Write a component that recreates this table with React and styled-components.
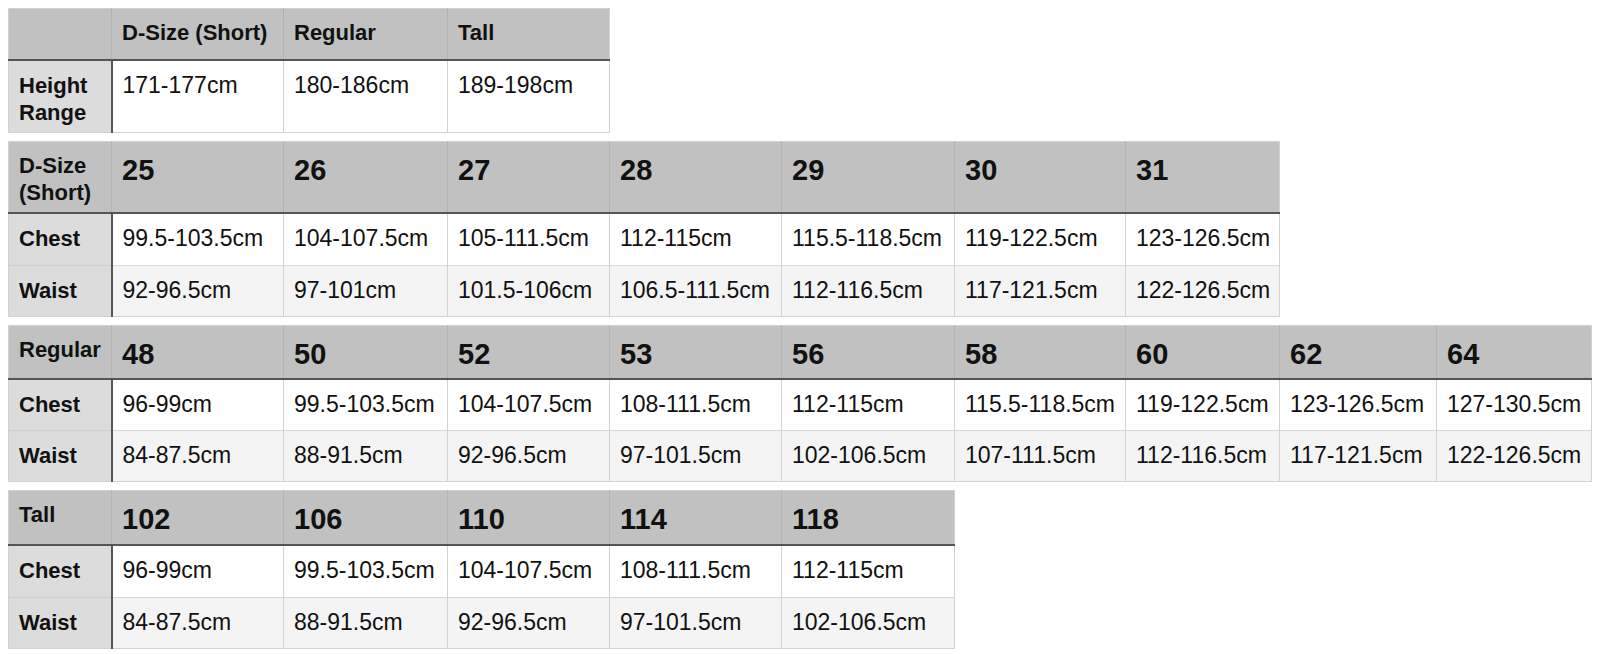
import React from "react";
import styled, { createGlobalStyle } from "styled-components";

const Global = createGlobalStyle`
  html, body { margin: 0; padding: 0; background: #ffffff; }
  body { font-family: "Liberation Sans", Arial, Helvetica, sans-serif; color: #111; }
`;

const COLS = [103, 172, 164, 162, 172, 173, 171, 154, 157, 155];

const Page = styled.div`
  display: flex;
  flex-direction: column;
  align-items: flex-start;
  gap: 8px;
  padding: 8px;
`;

const Table = styled.table`
  border-collapse: collapse;
  table-layout: fixed;
  border: 1px solid #d2d2d2;
`;

const HeadRow = styled.tr`
  height: ${(p) => p.$h}px;
  background: #c0c1c0;
  border-bottom: 2px solid #555555;
`;

const BodyRow = styled.tr`
  height: ${(p) => p.$h}px;
  background: ${(p) => (p.$alt ? "#f4f4f4" : "#ffffff")};
`;

const Corner = styled.th`
  vertical-align: top;
  text-align: left;
  padding: 10px 10px 6px;
  font-size: 22px;
  line-height: 27px;
  font-weight: 700;
  border-right: 1px solid #b3b3b3;
`;

const HeadCell = styled.th`
  vertical-align: top;
  text-align: left;
  padding: 10px 10px 6px;
  font-size: ${(p) => (p.$big ? 29 : 22)}px;
  line-height: ${(p) => (p.$big ? 36 : 27)}px;
  font-weight: 700;
  border-left: 1px solid #b3b3b3;
  white-space: nowrap;
`;

const RowLabel = styled.th`
  vertical-align: top;
  text-align: left;
  padding: 11px 10px 6px;
  font-size: 22px;
  line-height: 27px;
  font-weight: 700;
  background: #dcdcdc;
  border-right: 2px solid #555555;
  border-top: 1px solid #cfcfcf;
`;

const Value = styled.td`
  vertical-align: top;
  padding: 11px 8px 6px 10px;
  font-size: 23px;
  line-height: 27px;
  border-left: 1px solid #d2d2d2;
  border-top: 1px solid #d7d7d7;
  white-space: nowrap;
`;

const tables = [
  {
    corner: "",
    headers: ["D-Size (Short)", "Regular", "Tall"],
    big: false,
    headH: 51,
    rows: [{ label: ["Height", "Range"], values: ["171-177cm", "180-186cm", "189-198cm"], h: 72 }],
  },
  {
    corner: ["D-Size", "(Short)"],
    headers: ["25", "26", "27", "28", "29", "30", "31"],
    big: true,
    headH: 72,
    rows: [
      { label: ["Chest"], values: ["99.5-103.5cm", "104-107.5cm", "105-111.5cm", "112-115cm", "115.5-118.5cm", "119-122.5cm", "123-126.5cm"], h: 52 },
      { label: ["Waist"], values: ["92-96.5cm", "97-101cm", "101.5-106cm", "106.5-111.5cm", "112-116.5cm", "117-121.5cm", "122-126.5cm"], h: 51 },
    ],
  },
  {
    corner: ["Regular"],
    headers: ["48", "50", "52", "53", "56", "58", "60", "62", "64"],
    big: true,
    headH: 54,
    rows: [
      { label: ["Chest"], values: ["96-99cm", "99.5-103.5cm", "104-107.5cm", "108-111.5cm", "112-115cm", "115.5-118.5cm", "119-122.5cm", "123-126.5cm", "127-130.5cm"], h: 51 },
      { label: ["Waist"], values: ["84-87.5cm", "88-91.5cm", "92-96.5cm", "97-101.5cm", "102-106.5cm", "107-111.5cm", "112-116.5cm", "117-121.5cm", "122-126.5cm"], h: 51 },
    ],
  },
  {
    corner: ["Tall"],
    headers: ["102", "106", "110", "114", "118"],
    big: true,
    headH: 55,
    rows: [
      { label: ["Chest"], values: ["96-99cm", "99.5-103.5cm", "104-107.5cm", "108-111.5cm", "112-115cm"], h: 52 },
      { label: ["Waist"], values: ["84-87.5cm", "88-91.5cm", "92-96.5cm", "97-101.5cm", "102-106.5cm"], h: 51 },
    ],
  },
];

function Lines({ parts }) {
  if (!parts) return null;
  const arr = Array.isArray(parts) ? parts : [parts];
  return arr.map((t, i) => (
    <React.Fragment key={i}>
      {i > 0 && <br />}
      {t}
    </React.Fragment>
  ));
}

function SizeTable({ t }) {
  const n = t.headers.length + 1;
  const widths = COLS.slice(0, n);
  const total = widths.reduce((a, b) => a + b, 0);
  return (
    <Table style={{ width: total }}>
      <colgroup>
        {widths.map((w, i) => (
          <col key={i} style={{ width: w }} />
        ))}
      </colgroup>
      <thead>
        <HeadRow $h={t.headH}>
          <Corner>
            <Lines parts={t.corner} />
          </Corner>
          {t.headers.map((h) => (
            <HeadCell key={h} $big={t.big}>
              {h}
            </HeadCell>
          ))}
        </HeadRow>
      </thead>
      <tbody>
        {t.rows.map((r, ri) => (
          <BodyRow key={ri} $h={r.h} $alt={ri % 2 === 1}>
            <RowLabel>
              <Lines parts={r.label} />
            </RowLabel>
            {r.values.map((v, vi) => (
              <Value key={vi}>{v}</Value>
            ))}
          </BodyRow>
        ))}
      </tbody>
    </Table>
  );
}

export default function App() {
  return (
    <>
      <Global />
      <Page>
        {tables.map((t, i) => (
          <SizeTable key={i} t={t} />
        ))}
      </Page>
    </>
  );
}
